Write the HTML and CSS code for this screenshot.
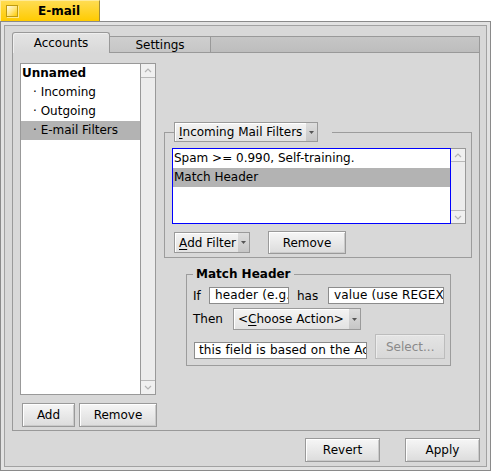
FILE: index.html
```html
<!DOCTYPE html>
<html>
<head>
<meta charset="utf-8">
<title>E-mail</title>
<link rel="stylesheet" href="styles.css">
</head>
<body>
<div class="win">
  <div class="wtab"><div class="close"></div><div class="wtitle">E-mail</div></div>
  <div class="frame">
    <div class="content">
      <div class="tabview">
        <div class="tabs">
          <div class="tab active">Accounts</div>
          <div class="tab">Settings</div>
          <div class="tab-fill"></div>
        </div>
        <div class="tabbody">
          <div class="leftcol">
            <div class="listbox">
              <ul class="items">
                <li class="row head">Unnamed</li>
                <li class="row sub">· Incoming</li>
                <li class="row sub">· Outgoing</li>
                <li class="row sub sel">· E-mail Filters</li>
              </ul>
              <div class="vscroll">
                <div class="arrow up"><svg width="8" height="5" viewBox="0 0 8 5"><polyline points="1,4 4,1 7,4" fill="none" stroke="#b4b4b4" stroke-width="1.2"/></svg></div>
                <div class="track"></div>
                <div class="arrow down"><svg width="8" height="5" viewBox="0 0 8 5"><polyline points="1,1 4,4 7,1" fill="none" stroke="#b4b4b4" stroke-width="1.2"/></svg></div>
              </div>
            </div>
            <div class="btnrow">
              <button class="btn b-add">Add</button>
              <button class="btn b-remove">Remove</button>
            </div>
          </div>
          <div class="rightcol">
            <fieldset class="box filters">
              <legend class="flegend">
                <div class="menu m-incoming"><span class="mlbl"><u>I</u>ncoming Mail Filters</span><span class="marr"><svg width="5" height="3" viewBox="0 0 5 3"><polygon points="0,0 5,0 2.5,3" fill="#555"/></svg></span></div>
              </legend>
              <div class="flistwrap">
                <ul class="flist">
                  <li class="frow">Spam &gt;= 0.990, Self-training.</li>
                  <li class="frow sel">Match Header</li>
                </ul>
                <div class="vscroll small">
                  <div class="arrow up"><svg width="8" height="5" viewBox="0 0 8 5"><polyline points="1,4 4,1 7,4" fill="none" stroke="#b4b4b4" stroke-width="1.2"/></svg></div>
                  <div class="track"></div>
                  <div class="arrow down"><svg width="8" height="5" viewBox="0 0 8 5"><polyline points="1,1 4,4 7,1" fill="none" stroke="#b4b4b4" stroke-width="1.2"/></svg></div>
                </div>
              </div>
              <div class="fbtns">
                <div class="menu m-addfilter"><span class="mlbl"><u>A</u>dd Filter</span><span class="marr"><svg width="5" height="3" viewBox="0 0 5 3"><polygon points="0,0 5,0 2.5,3" fill="#555"/></svg></span></div>
                <button class="btn b-fremove">Remove</button>
              </div>
            </fieldset>
            <fieldset class="box match">
              <legend class="mlegend">Match Header</legend>
              <div class="mrow r1">
                <span class="lbl l-if">If</span>
                <div class="field f-header"><span class="ftxt">header (e.g. Subject)</span></div>
                <span class="lbl l-has">has</span>
                <div class="field f-value"><span class="ftxt">value (use REGEX: in from of regular expressions like *spam*)</span></div>
              </div>
              <div class="mrow r2">
                <span class="lbl l-then">Then</span>
                <div class="menu m-action"><span class="mlbl">&lt;<u>C</u>hoose Action&gt;</span><span class="marr"><svg width="5" height="3" viewBox="0 0 5 3"><polygon points="0,0 5,0 2.5,3" fill="#555"/></svg></span></div>
              </div>
              <div class="mrow r3">
                <div class="field f-arg"><span class="ftxt">this field is based on the Action</span></div>
                <button class="btn b-select" disabled>Select...</button>
              </div>
            </fieldset>
          </div>
        </div>
      </div>
      <div class="footer">
        <button class="btn b-revert">Revert</button>
        <button class="btn b-apply">Apply</button>
      </div>
    </div>
  </div>
</div>
</body>
</html>
```
FILE: styles.css
```css
* { box-sizing: border-box; }
body {
  margin: 0;
  background: #ffffff;
  font-family: "DejaVu Sans", sans-serif;
  font-size: 12px;
  color: #000;
}
ul { margin: 0; padding: 0; list-style: none; }

/* window tab */
.wtab {
  width: 100px;
  height: 21px;
  background: linear-gradient(#ffdc52, #ffcb00);
  border-top: 1px solid #ffeb99;
  border-left: 1px solid #ffeb99;
  border-right: 1px solid #a08c3c;
  display: flex;
  align-items: center;
  padding-left: 5px;
}
.close {
  flex: 0 0 12px;
  width: 12px;
  height: 12px;
  border: 1px solid #bf9b10;
  background: linear-gradient(135deg, #fffbe8 0%, #ffe680 50%, #ffcb00 100%);
  box-shadow: 1px 1px 0 #ffe98c;
}
.wtitle {
  flex: none;
  padding-left: 20px;
  font-weight: bold;
  line-height: 14px;
}

/* window frame */
.frame {
  width: 491px;
  height: 450px;
  border: 1px solid #8a8a8a;
  background: #e2e2e2;
  padding: 3px;
}
.content {
  height: 100%;
  border: 1px solid #a2a2a2;
  background: #d8d8d8;
  padding: 6px 6px 4px 7px;
}

/* tab view */
.tabview {
  height: 399px;
  display: flex;
  flex-direction: column;
}
.tabs {
  display: flex;
  height: 21px;
  flex: none;
}
.tab {
  display: flex;
  align-items: center;
  justify-content: center;
}
.tab.active {
  width: 98px;
  border: 1px solid #999;
  border-bottom: none;
  border-radius: 3px 3px 0 0;
  background: linear-gradient(#e4e4e4, #d8d8d8);
  box-shadow: inset 1px 1px 0 #efefef;
}
.tab:not(.active) {
  width: 101px;
  margin-top: 4px;
  border-top: 1px solid #999;
  border-right: 1px solid #999;
  border-bottom: 1px solid #999;
  background: linear-gradient(#cfcfcf, #c6c6c6);
}
.tab-fill {
  flex: 1;
  margin-top: 4px;
  border-top: 1px solid #999;
  border-right: 1px solid #999;
  border-bottom: 1px solid #999;
  background: linear-gradient(#c6c6c6, #bdbdbd);
}
.tabbody {
  flex: 1;
  border: 1px solid #999;
  border-top: none;
  display: flex;
}

/* left column */
.leftcol {
  width: 137px;
  margin-left: 7px;
  padding-top: 10px;
}
.listbox {
  display: flex;
  width: 136px;
  height: 332px;
  border: 1px solid #999;
  background: #fff;
}
.items { flex: 1; }
.row {
  height: 19px;
  line-height: 19px;
  white-space: nowrap;
}
.row.head { font-weight: bold; padding-left: 1px; }
.row.sub { padding-left: 12px; }
.sel { background: #b3b3b3; }

.vscroll {
  width: 15px;
  border-left: 1px solid #999;
  background: #efefef;
  display: flex;
  flex-direction: column;
}
.vscroll .arrow {
  height: 14px;
  display: flex;
  align-items: center;
  justify-content: center;
  background: #f0f0f0;
}
.vscroll .arrow.up { border-bottom: 1px solid #b8b8b8; }
.vscroll .arrow.down { border-top: 1px solid #b8b8b8; }
.vscroll .track { flex: 1; background: #ececec; }

.btnrow {
  display: flex;
  margin-top: 8px;
}
.btn {
  font: inherit;
  color: #000;
  padding: 0;
  border: 1px solid #9a9a9a;
  background: linear-gradient(#f6f6f6, #dcdcdc);
  box-shadow: inset 1px 1px 0 #ffffff, inset -1px -1px 0 #cacaca;
  height: 24px;
}
.b-add { width: 53px; margin-left: 2px; }
.b-remove { width: 78px; margin-left: 4px; }

/* right column */
.rightcol {
  width: 308px;
  margin-left: 7px;
  padding-top: 69px;
}
.box {
  margin: 0;
  min-width: 0;
  border: 1px solid #9c9c9c;
}
.filters {
  width: 308px;
  padding: 6px 5px 3px 7px;
}
.flegend {
  padding: 0 14px 0 0;
  margin-left: 2px;
}
.menu {
  display: flex;
  border: 1px solid #9a9a9a;
  background: linear-gradient(#f4f4f4, #e2e2e2);
  box-shadow: inset 1px 1px 0 #ffffff;
  white-space: nowrap;
}
.menu .mlbl {
  flex: 1;
  padding-left: 4px;
  display: flex;
  align-items: center;
}
.menu .marr {
  width: 11px;
  display: flex;
  align-items: center;
  justify-content: center;
  background: linear-gradient(#dedede, #c6c6c6);
}
.menu u { text-underline-offset: 2px; }
.m-incoming { width: 144px; height: 20px; }
.m-addfilter { width: 76px; height: 21px; }
.m-action { width: 128px; height: 22px; }

.flistwrap {
  display: flex;
  height: 76px;
  width: 294px;
}
.flist {
  width: 279px;
  border: 1px solid #0000ff;
  background: #fff;
}
.frow {
  height: 19px;
  line-height: 19px;
  padding-left: 1px;
  white-space: nowrap;
}
.vscroll.small {
  border: 1px solid #999;
  border-left: none;
}
.vscroll.small .arrow { height: 13px; }

.fbtns {
  display: flex;
  align-items: center;
  margin-top: 7px;
  height: 23px;
}
.m-addfilter { margin-left: 2px; }
.b-fremove { width: 78px; height: 23px; margin-left: 18px; }

/* match header box */
.match {
  width: 265px;
  margin: 8px 0 0 22px;
  padding: 5px 5px 6px 6px;
}
.mlegend {
  padding: 0 3px;
  margin-left: 0;
  font-weight: bold;
  line-height: 16px;
}
.mrow {
  display: flex;
  align-items: center;
}
.r2 { margin-top: 4px; }
.r3 { margin-top: 4px; align-items: flex-end; }
.lbl { white-space: nowrap; }
.l-if { width: 16px; }
.l-has { width: 39px; padding-left: 8px; }
.l-then { width: 40px; }
.field {
  height: 17px;
  line-height: 15px;
  border: 1px solid #8c8c8c;
  background: #fff;
  padding-left: 5px;
  overflow: hidden;
  white-space: nowrap;
}
.ftxt { letter-spacing: 0.15px; }
.f-header { width: 80px; }
.f-value { width: 116px; }
.f-arg { width: 177px; margin-left: 1px; padding-left: 4px; }
.b-select {
  width: 71px;
  height: 25px;
  margin-left: 8px;
  color: #8a8a8a;
  border: 1px solid #bcbcbc;
  background: linear-gradient(#e4e4e4, #d8d8d8);
  box-shadow: inset 1px 1px 0 #ececec;
}

/* footer */
.footer {
  display: flex;
  justify-content: flex-end;
  margin-top: 7px;
}
.b-revert { width: 75px; }
.b-apply { width: 75px; margin-left: 25px; }
```
